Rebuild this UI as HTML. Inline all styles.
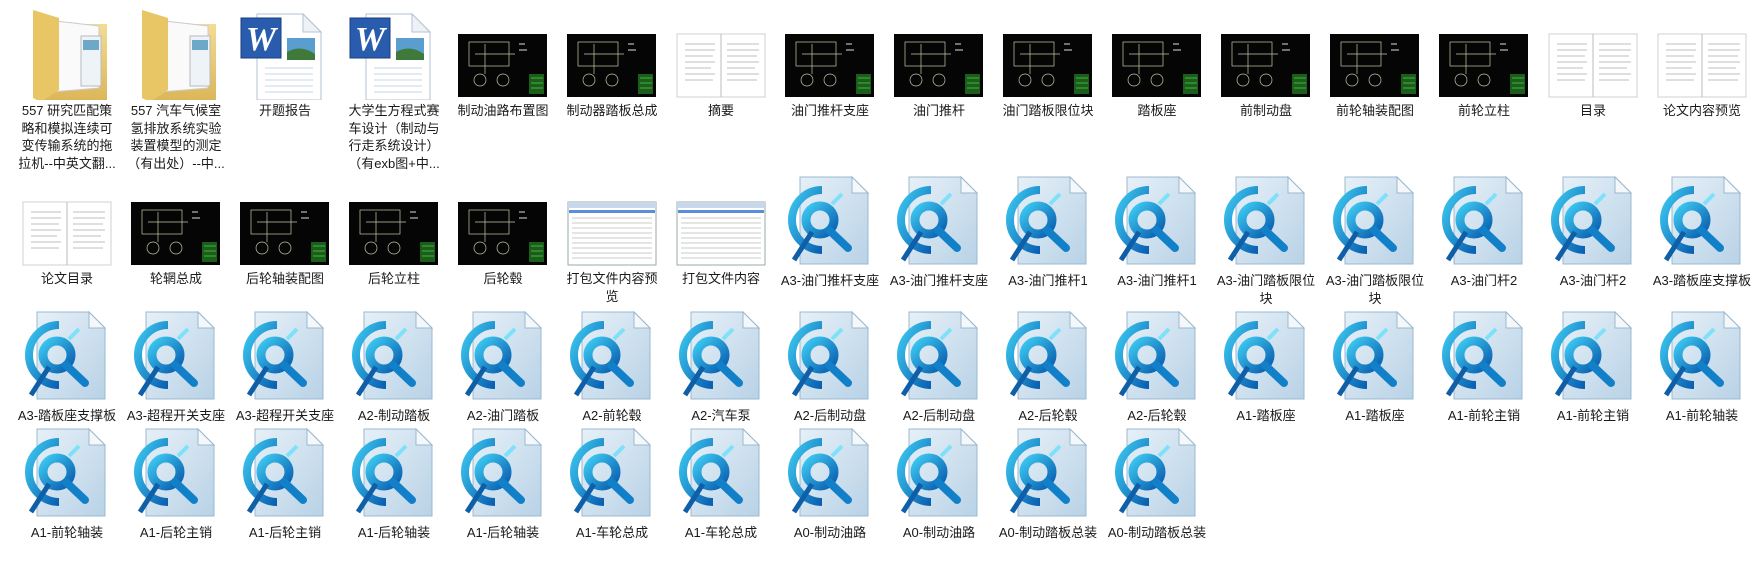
<!DOCTYPE html>
<html><head><meta charset="utf-8"><style>
html,body{margin:0;padding:0;background:#fff;width:1757px;height:583px;overflow:hidden;position:relative}
.c{position:absolute;width:100px;text-align:center}
.c svg{display:block;width:96px;height:96px;margin:0 2px}
.c p{margin:2px 0 0;font:13px/17.5px "Liberation Sans","Noto Sans CJK SC",sans-serif;color:#1a1a1a;word-break:break-all}
</style></head><body>
<svg width="0" height="0" style="position:absolute">
<defs>
<linearGradient id="pg" x1="0" y1="0" x2="1" y2="1"><stop offset="0" stop-color="#e6f0f8"/><stop offset="1" stop-color="#b8d2e6"/></linearGradient>
<linearGradient id="bl" x1="0" y1="0" x2="1" y2="1"><stop offset="0" stop-color="#3cc8f0"/><stop offset="1" stop-color="#0a5fb0"/></linearGradient>
<linearGradient id="fd" x1="0" y1="0" x2="0" y2="1"><stop offset="0" stop-color="#f6e3a0"/><stop offset="1" stop-color="#dcb659"/></linearGradient>
<g id="caxa">
<path d="M18 3H70L86 19V90H18Z" fill="url(#pg)" stroke="#9bb8cf"/>
<path d="M70 3V19H86Z" fill="#f4f8fb" stroke="#9bb8cf"/>
<path d="M40 16A30 30 0 1 0 40 76" fill="none" stroke="url(#bl)" stroke-width="8"/>
<circle cx="38" cy="46" r="14" fill="none" stroke="url(#bl)" stroke-width="9"/>
<path d="M47 56L66 74" stroke="#1280c8" stroke-width="8" stroke-linecap="round"/>
<path d="M30 58L12 86" stroke="#0f5ea8" stroke-width="5"/>
<path d="M50 30L60 20" stroke="#7fe0fa" stroke-width="4"/>
</g>
<g id="cad">
<rect x="3" y="30" width="89" height="63" fill="#050505"/>
<g stroke="#c8c8a8" stroke-width=".7" fill="none"><rect x="14" y="38" width="40" height="24"/><circle cx="25" cy="76" r="6"/><circle cx="48" cy="76" r="6"/><path d="M20 50H60M30 40V70"/></g>
<rect x="74" y="70" width="15" height="20" fill="#1a5e1a"/>
<path d="M76 74H88M76 79H88M76 84H88" stroke="#5c5" stroke-width=".7"/>
<path d="M64 40H70M64 46H72" stroke="#ddd"/>
</g>
<g id="doc">
<rect x="4" y="30" width="88" height="63" fill="#fff" stroke="#d0d0d0"/>
<path d="M48 30V93" stroke="#bbb"/>
<g stroke="#aaa" stroke-width=".8"><path d="M12 40H42M12 46H42M12 52H40M12 58H42M12 64H38M12 70H42M12 76H40M54 40H86M54 46H86M54 52H84M54 58H86M54 64H82M54 70H86M54 76H84"/></g>
</g>
<g id="shot">
<rect x="4" y="30" width="88" height="63" fill="#fff" stroke="#9aa"/>
<rect x="4" y="30" width="88" height="6" fill="#c8d8ea"/>
<rect x="5" y="38" width="86" height="3" fill="#5a8ed8"/>
<g stroke="#bbb" stroke-width=".8"><path d="M8 46H88M8 51H88M8 56H88M8 61H88M8 66H88M8 71H88M8 76H88M8 81H88M8 86H88"/></g>
</g>
<g id="fold">
<path d="M14 6L40 14V20H88V96H22L14 92Z" fill="url(#fd)"/>
<path d="M28 16L80 22V84L32 88Z" fill="#fafafa" stroke="#ccc"/>
<rect x="62" y="32" width="20" height="50" fill="#eef3f8" stroke="#bbb"/>
<rect x="64" y="36" width="16" height="10" fill="#6ea8c8"/>
<path d="M14 6L40 14V86L22 98L14 94Z" fill="#e8c565"/>
</g>
<g id="word">
<path d="M20 10H66L84 28V96H20Z" fill="#fff" stroke="#b5c2d0"/>
<path d="M66 10V28H84Z" fill="#eef2f6" stroke="#b5c2d0"/>
<g stroke="#c9d6e4"><path d="M28 64H76M28 70H76M28 76H76M28 82H76M28 88H76"/></g>
<rect x="50" y="34" width="28" height="22" fill="#5a9ed0"/><path d="M50 48Q64 40 78 50V56H50Z" fill="#3f7a3a"/>
<rect x="4" y="14" width="40" height="40" fill="#2a5cae" stroke="#183e7e"/>
<text x="24" y="46" font-family="Liberation Serif,serif" font-weight="bold" font-style="italic" font-size="34" fill="#fff" text-anchor="middle">W</text>
</g>
</defs></svg>

<div class="c" style="left:17px;top:4px"><svg><use href="#fold"/></svg><p>557 研究匹配策略和模拟连续可变传输系统的拖拉机--中英文翻...</p></div>
<div class="c" style="left:126px;top:4px"><svg><use href="#fold"/></svg><p>557 汽车气候室氢排放系统实验装置模型的测定（有出处）--中...</p></div>
<div class="c" style="left:235px;top:4px"><svg><use href="#word"/></svg><p>开题报告</p></div>
<div class="c" style="left:344px;top:4px"><svg><use href="#word"/></svg><p>大学生方程式赛车设计（制动与行走系统设计）（有exb图+中...</p></div>
<div class="c" style="left:453px;top:4px"><svg><use href="#cad"/></svg><p>制动油路布置图</p></div>
<div class="c" style="left:562px;top:4px"><svg><use href="#cad"/></svg><p>制动器踏板总成</p></div>
<div class="c" style="left:671px;top:4px"><svg><use href="#doc"/></svg><p>摘要</p></div>
<div class="c" style="left:780px;top:4px"><svg><use href="#cad"/></svg><p>油门推杆支座</p></div>
<div class="c" style="left:889px;top:4px"><svg><use href="#cad"/></svg><p>油门推杆</p></div>
<div class="c" style="left:998px;top:4px"><svg><use href="#cad"/></svg><p>油门踏板限位块</p></div>
<div class="c" style="left:1107px;top:4px"><svg><use href="#cad"/></svg><p>踏板座</p></div>
<div class="c" style="left:1216px;top:4px"><svg><use href="#cad"/></svg><p>前制动盘</p></div>
<div class="c" style="left:1325px;top:4px"><svg><use href="#cad"/></svg><p>前轮轴装配图</p></div>
<div class="c" style="left:1434px;top:4px"><svg><use href="#cad"/></svg><p>前轮立柱</p></div>
<div class="c" style="left:1543px;top:4px"><svg><use href="#doc"/></svg><p>目录</p></div>
<div class="c" style="left:1652px;top:4px"><svg><use href="#doc"/></svg><p>论文内容预览</p></div>

<div class="c" style="left:17px;top:172px"><svg><use href="#doc"/></svg><p>论文目录</p></div>
<div class="c" style="left:126px;top:172px"><svg><use href="#cad"/></svg><p>轮辋总成</p></div>
<div class="c" style="left:235px;top:172px"><svg><use href="#cad"/></svg><p>后轮轴装配图</p></div>
<div class="c" style="left:344px;top:172px"><svg><use href="#cad"/></svg><p>后轮立柱</p></div>
<div class="c" style="left:453px;top:172px"><svg><use href="#cad"/></svg><p>后轮毂</p></div>
<div class="c" style="left:562px;top:172px"><svg><use href="#shot"/></svg><p>打包文件内容预览</p></div>
<div class="c" style="left:671px;top:172px"><svg><use href="#shot"/></svg><p>打包文件内容</p></div>
<div class="c" style="left:780px;top:174px"><svg><use href="#caxa"/></svg><p>A3-油门推杆支座</p></div>
<div class="c" style="left:889px;top:174px"><svg><use href="#caxa"/></svg><p>A3-油门推杆支座</p></div>
<div class="c" style="left:998px;top:174px"><svg><use href="#caxa"/></svg><p>A3-油门推杆1</p></div>
<div class="c" style="left:1107px;top:174px"><svg><use href="#caxa"/></svg><p>A3-油门推杆1</p></div>
<div class="c" style="left:1216px;top:174px"><svg><use href="#caxa"/></svg><p>A3-油门踏板限位块</p></div>
<div class="c" style="left:1325px;top:174px"><svg><use href="#caxa"/></svg><p>A3-油门踏板限位块</p></div>
<div class="c" style="left:1434px;top:174px"><svg><use href="#caxa"/></svg><p>A3-油门杆2</p></div>
<div class="c" style="left:1543px;top:174px"><svg><use href="#caxa"/></svg><p>A3-油门杆2</p></div>
<div class="c" style="left:1652px;top:174px"><svg><use href="#caxa"/></svg><p>A3-踏板座支撑板</p></div>

<div class="c" style="left:17px;top:309px"><svg><use href="#caxa"/></svg><p>A3-踏板座支撑板</p></div>
<div class="c" style="left:126px;top:309px"><svg><use href="#caxa"/></svg><p>A3-超程开关支座</p></div>
<div class="c" style="left:235px;top:309px"><svg><use href="#caxa"/></svg><p>A3-超程开关支座</p></div>
<div class="c" style="left:344px;top:309px"><svg><use href="#caxa"/></svg><p>A2-制动踏板</p></div>
<div class="c" style="left:453px;top:309px"><svg><use href="#caxa"/></svg><p>A2-油门踏板</p></div>
<div class="c" style="left:562px;top:309px"><svg><use href="#caxa"/></svg><p>A2-前轮毂</p></div>
<div class="c" style="left:671px;top:309px"><svg><use href="#caxa"/></svg><p>A2-汽车泵</p></div>
<div class="c" style="left:780px;top:309px"><svg><use href="#caxa"/></svg><p>A2-后制动盘</p></div>
<div class="c" style="left:889px;top:309px"><svg><use href="#caxa"/></svg><p>A2-后制动盘</p></div>
<div class="c" style="left:998px;top:309px"><svg><use href="#caxa"/></svg><p>A2-后轮毂</p></div>
<div class="c" style="left:1107px;top:309px"><svg><use href="#caxa"/></svg><p>A2-后轮毂</p></div>
<div class="c" style="left:1216px;top:309px"><svg><use href="#caxa"/></svg><p>A1-踏板座</p></div>
<div class="c" style="left:1325px;top:309px"><svg><use href="#caxa"/></svg><p>A1-踏板座</p></div>
<div class="c" style="left:1434px;top:309px"><svg><use href="#caxa"/></svg><p>A1-前轮主销</p></div>
<div class="c" style="left:1543px;top:309px"><svg><use href="#caxa"/></svg><p>A1-前轮主销</p></div>
<div class="c" style="left:1652px;top:309px"><svg><use href="#caxa"/></svg><p>A1-前轮轴装</p></div>

<div class="c" style="left:17px;top:426px"><svg><use href="#caxa"/></svg><p>A1-前轮轴装</p></div>
<div class="c" style="left:126px;top:426px"><svg><use href="#caxa"/></svg><p>A1-后轮主销</p></div>
<div class="c" style="left:235px;top:426px"><svg><use href="#caxa"/></svg><p>A1-后轮主销</p></div>
<div class="c" style="left:344px;top:426px"><svg><use href="#caxa"/></svg><p>A1-后轮轴装</p></div>
<div class="c" style="left:453px;top:426px"><svg><use href="#caxa"/></svg><p>A1-后轮轴装</p></div>
<div class="c" style="left:562px;top:426px"><svg><use href="#caxa"/></svg><p>A1-车轮总成</p></div>
<div class="c" style="left:671px;top:426px"><svg><use href="#caxa"/></svg><p>A1-车轮总成</p></div>
<div class="c" style="left:780px;top:426px"><svg><use href="#caxa"/></svg><p>A0-制动油路</p></div>
<div class="c" style="left:889px;top:426px"><svg><use href="#caxa"/></svg><p>A0-制动油路</p></div>
<div class="c" style="left:998px;top:426px"><svg><use href="#caxa"/></svg><p>A0-制动踏板总装</p></div>
<div class="c" style="left:1107px;top:426px"><svg><use href="#caxa"/></svg><p>A0-制动踏板总装</p></div>
</body></html>
